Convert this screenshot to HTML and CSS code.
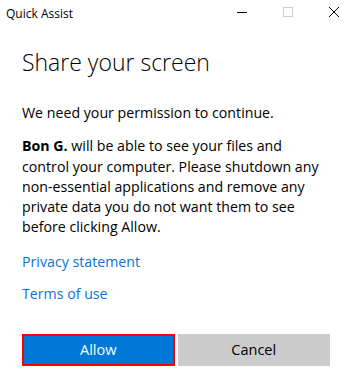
FILE: index.html
```html
<!DOCTYPE html>
<html lang="en">
<head>
    <meta charset="UTF-8">
    <meta name="viewport" content="width=device-width, initial-scale=1.0">
    <title>Quick Assist</title>
    <link rel="stylesheet" href="styles.css">
</head>
<body>
    <div class="window">
        <div class="titlebar">
            <div class="title">Quick Assist</div>
            <div class="controls">
                <span class="ctrl">
                    <svg width="10" height="10" viewBox="0 0 10 10"><path d="M0 5.5H10" stroke="#000" stroke-width="1"/></svg>
                </span>
                <span class="ctrl">
                    <svg width="10" height="10" viewBox="0 0 10 10"><rect x="0.5" y="0.5" width="9" height="9" fill="none" stroke="#ccc" stroke-width="1"/></svg>
                </span>
                <span class="ctrl">
                    <svg width="10" height="10" viewBox="0 0 10 10"><path d="M0 0L10 10M10 0L0 10" stroke="#000" stroke-width="1"/></svg>
                </span>
            </div>
        </div>

        <div class="content">
            <h1>Share your screen</h1>
            <p class="lead">We need your permission to continue.</p>
            <p class="info"><b>Bon G.</b> will be able to see your files and control your computer. Please shutdown any non-essential applications and remove any private data you do not want them to see before clicking Allow.</p>

            <ul class="links">
                <li><a href="#">Privacy statement</a></li>
                <li><a href="#">Terms of use</a></li>
            </ul>

            <div class="buttons">
                <button class="btn allow">Allow</button>
                <button class="btn cancel">Cancel</button>
            </div>
        </div>
    </div>
</body>
</html>
```

FILE: styles.css
```css
body {
    margin: 0;
    padding: 0;
    background: white;
    color: black;
    font-family: "Open Sans", "Noto Sans", sans-serif;
    overflow: hidden;
}

.titlebar {
    display: flex;
    align-items: center;
    justify-content: space-between;
    height: 24px;
}

.title {
    font-size: 12px;
    padding-left: 6px;
    padding-top: 2px;
}

.controls {
    display: flex;
}

.ctrl {
    display: flex;
    align-items: center;
    justify-content: center;
    width: 46px;
    height: 24px;
}

.content {
    padding: 0 27px 0 22px;
}

h1 {
    font-size: 23px;
    font-weight: 300;
    margin: 21px 0 0;
    line-height: 34px;
}

p {
    font-size: 14.2px;
    line-height: 20.3px;
    margin: 0;
}

.lead {
    margin-top: 24px;
}

.info {
    margin-top: 13px;
}

.info b {
    font-weight: 700;
}

.links {
    list-style: none;
    padding: 0;
    margin: 14px 0 0;
    font-size: 14.2px;
}

.links li {
    line-height: 20px;
    margin-bottom: 12px;
}

.links a {
    color: #0a74d6;
    text-decoration: none;
}

.buttons {
    display: grid;
    grid-template-columns: 1fr 1fr;
    gap: 3px;
    margin-top: 30px;
}

.btn {
    height: 32px;
    border: none;
    font-family: inherit;
    font-size: 14.5px;
    padding: 0;
}

.allow {
    background: #0078d7;
    color: white;
    border: 2px solid #ff0000;
}

.cancel {
    background: #cccccc;
    color: black;
}
```
